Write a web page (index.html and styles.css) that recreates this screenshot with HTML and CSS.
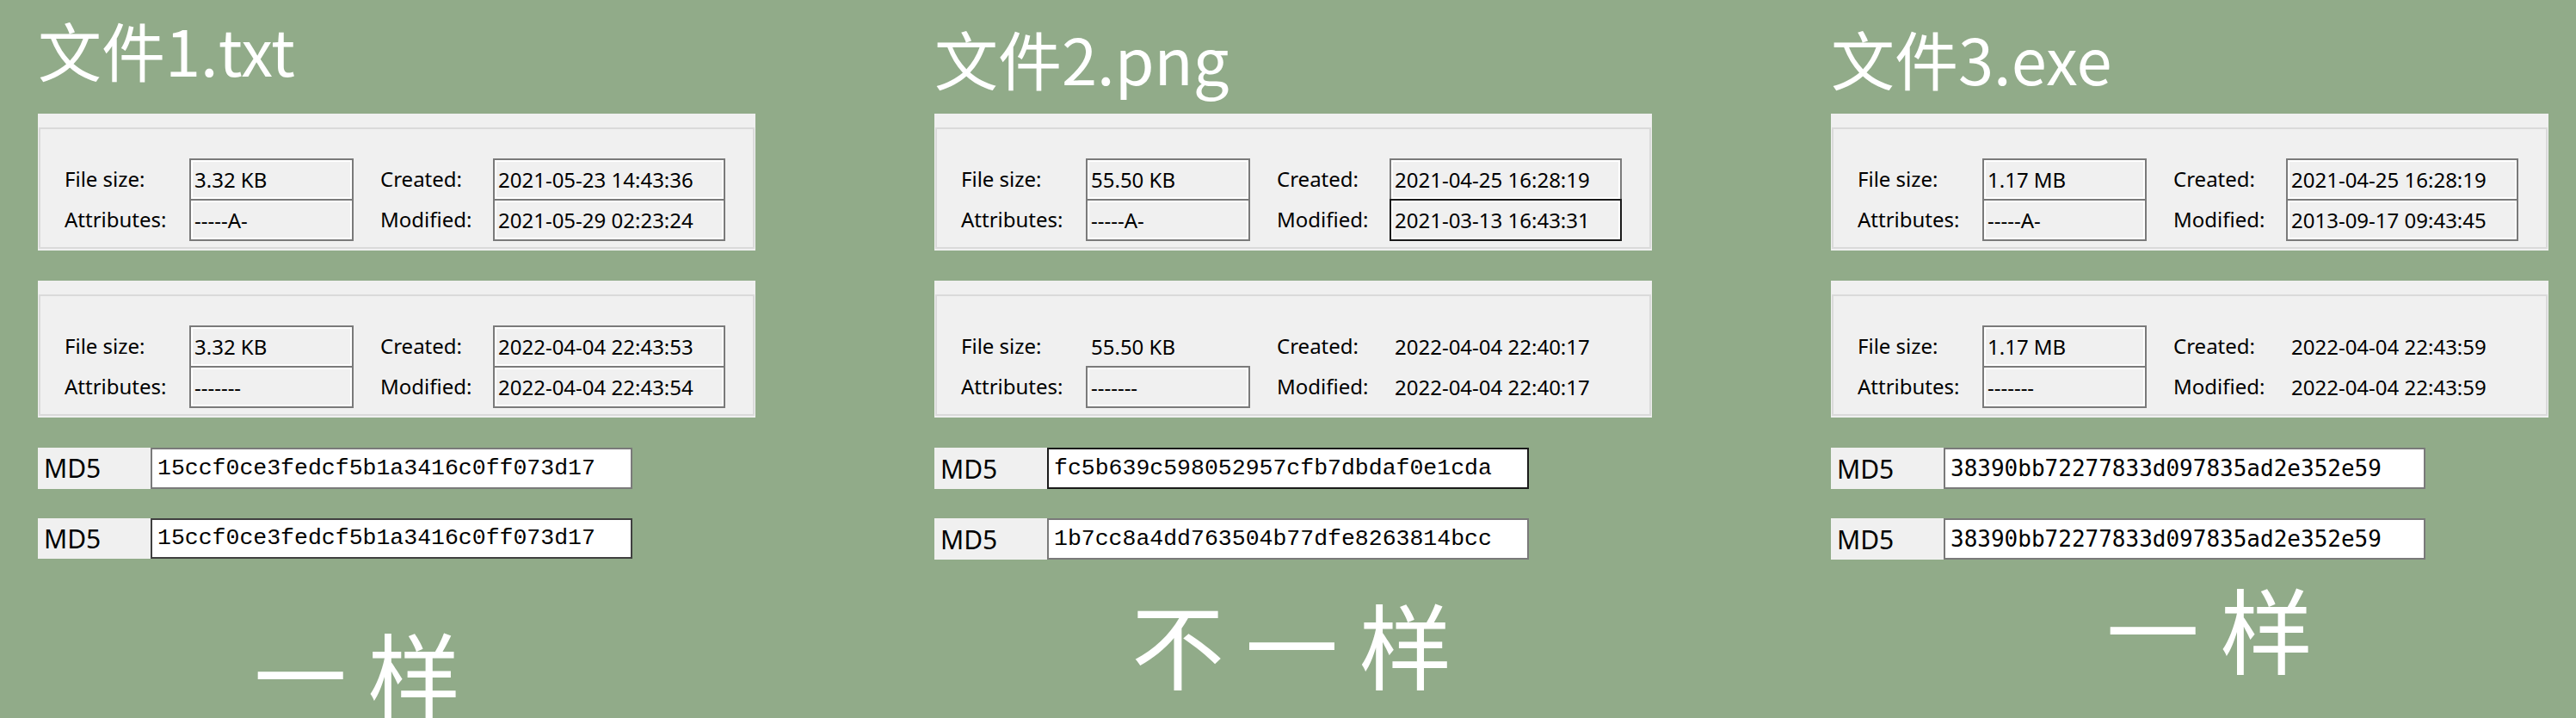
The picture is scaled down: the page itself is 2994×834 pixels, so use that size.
FILE: index.html
```html
<!DOCTYPE html>
<html lang="zh-CN">
<head>
    <meta charset="UTF-8">
    <meta name="viewport" content="width=device-width, initial-scale=1.0">
    <title>文件属性与 MD5 对比</title>
    <link rel="stylesheet" href="styles.css">
</head>
<body>

    <div class="board">

        <!-- 文件1 -->
        <section class="column column--first">
            <h1 class="file-name">文件1.txt</h1>

            <div class="panel">
                <div class="panel-body">
                    <span class="label">File size:</span>
                    <span class="field">3.32 KB</span>
                    <span class="label label--right">Created:</span>
                    <span class="field">2021-05-23 14:43:36</span>
                    <span class="label">Attributes:</span>
                    <span class="field">-----A-</span>
                    <span class="label label--right">Modified:</span>
                    <span class="field">2021-05-29 02:23:24</span>
                </div>
            </div>

            <div class="panel">
                <div class="panel-body">
                    <span class="label">File size:</span>
                    <span class="field">3.32 KB</span>
                    <span class="label label--right">Created:</span>
                    <span class="field">2022-04-04 22:43:53</span>
                    <span class="label">Attributes:</span>
                    <span class="field">-------</span>
                    <span class="label label--right">Modified:</span>
                    <span class="field">2022-04-04 22:43:54</span>
                </div>
            </div>

            <div class="md5-row">
                <span class="md5-label">MD5</span>
                <span class="md5-value">15ccf0ce3fedcf5b1a3416c0ff073d17</span>
            </div>
            <div class="md5-row md5-row--second">
                <span class="md5-label">MD5</span>
                <span class="md5-value md5-value--hover">15ccf0ce3fedcf5b1a3416c0ff073d17</span>
            </div>

            <div class="verdict">一 样</div>
        </section>

        <!-- 文件2 -->
        <section class="column column--second">
            <h1 class="file-name">文件2.png</h1>

            <div class="panel">
                <div class="panel-body">
                    <span class="label">File size:</span>
                    <span class="field">55.50 KB</span>
                    <span class="label label--right">Created:</span>
                    <span class="field">2021-04-25 16:28:19</span>
                    <span class="label">Attributes:</span>
                    <span class="field">-----A-</span>
                    <span class="label label--right">Modified:</span>
                    <span class="field field--focus">2021-03-13 16:43:31</span>
                </div>
            </div>

            <div class="panel">
                <div class="panel-body">
                    <span class="label">File size:</span>
                    <span class="field field--plain">55.50 KB</span>
                    <span class="label label--right">Created:</span>
                    <span class="field field--plain">2022-04-04 22:40:17</span>
                    <span class="label">Attributes:</span>
                    <span class="field">-------</span>
                    <span class="label label--right">Modified:</span>
                    <span class="field field--plain">2022-04-04 22:40:17</span>
                </div>
            </div>

            <div class="md5-row">
                <span class="md5-label">MD5</span>
                <span class="md5-value md5-value--focus">fc5b639c598052957cfb7dbdaf0e1cda</span>
            </div>
            <div class="md5-row md5-row--second">
                <span class="md5-label">MD5</span>
                <span class="md5-value">1b7cc8a4dd763504b77dfe8263814bcc</span>
            </div>

            <div class="verdict">不 一 样</div>
        </section>

        <!-- 文件3 -->
        <section class="column column--third">
            <h1 class="file-name">文件3.exe</h1>

            <div class="panel">
                <div class="panel-body">
                    <span class="label">File size:</span>
                    <span class="field">1.17 MB</span>
                    <span class="label label--right">Created:</span>
                    <span class="field">2021-04-25 16:28:19</span>
                    <span class="label">Attributes:</span>
                    <span class="field">-----A-</span>
                    <span class="label label--right">Modified:</span>
                    <span class="field">2013-09-17 09:43:45</span>
                </div>
            </div>

            <div class="panel">
                <div class="panel-body">
                    <span class="label">File size:</span>
                    <span class="field">1.17 MB</span>
                    <span class="label label--right">Created:</span>
                    <span class="field field--plain">2022-04-04 22:43:59</span>
                    <span class="label">Attributes:</span>
                    <span class="field">-------</span>
                    <span class="label label--right">Modified:</span>
                    <span class="field field--plain">2022-04-04 22:43:59</span>
                </div>
            </div>

            <div class="md5-row">
                <span class="md5-label">MD5</span>
                <span class="md5-value md5-value--sans">38390bb72277833d097835ad2e352e59</span>
            </div>
            <div class="md5-row md5-row--second">
                <span class="md5-label">MD5</span>
                <span class="md5-value md5-value--sans">38390bb72277833d097835ad2e352e59</span>
            </div>

            <div class="verdict">一 样</div>
        </section>

    </div>

</body>
</html>
```

FILE: styles.css
```css
/* Page */
body {
    margin: 0;
    padding: 0;
    background: #91ab89;
    font-family: 'Noto Sans', 'Noto Sans CJK SC', sans-serif;
    color: #000;
    overflow: hidden;
}

.board {
    display: flex;
    gap: 208px;
    padding-left: 44px;
    height: 834px;
}

/* One file per column */
.column {
    width: 834px;
    display: flex;
    flex-direction: column;
}

/* File title */
.file-name {
    margin: 29px 0 27px;
    font-family: 'Noto Sans CJK SC', sans-serif;
    font-size: 74px;
    font-weight: normal;
    line-height: 76px;
    color: #fff;
}

.column--first .file-name {
    margin: 19px 0 37px;
}

/* Properties panel (looks like a Windows tab page) */
.panel {
    background: #f0f0f0;
    padding: 16px 1px 2px 1px;
}

.panel + .panel {
    margin-top: 35px;
}

.panel-body {
    display: grid;
    grid-template-columns: 145px 191px 162px 270px;
    grid-template-rows: 47px 47px;
    padding: 34px 0 9px 28px;
    border: 2px solid #dadada;
}

.label {
    align-self: center;
    font-size: 24px;
    white-space: nowrap;
}

.label--right {
    padding-left: 31px;
}

.field {
    height: 49px;
    box-sizing: border-box;
    display: flex;
    align-items: center;
    padding: 0 4px;
    border: 2px solid #7a7a7a;
    box-shadow: inset 0 0 0 2px #fff;
    font-size: 24px;
    white-space: nowrap;
}

.field--focus {
    border-color: #1a1a1a;
}

.field--plain {
    border-color: transparent;
    box-shadow: none;
}

/* MD5 rows */
.md5-row {
    display: flex;
    height: 48px;
    margin-top: 35px;
}

.md5-row--second {
    margin-top: 34px;
}

.md5-label {
    width: 131px;
    box-sizing: border-box;
    padding-left: 7px;
    display: flex;
    align-items: center;
    background: #f0f0f0;
    font-size: 30px;
}

.md5-value {
    width: 560px;
    box-sizing: border-box;
    padding-left: 6px;
    display: flex;
    align-items: center;
    background: #fff;
    border: 2px solid #7a7a7a;
    font-family: 'Liberation Mono', monospace;
    font-size: 26.5px;
}

.md5-value--focus {
    border-color: #1a1a1a;
}

.md5-value--hover {
    border-color: #404040;
}

.md5-value--sans {
    font-family: 'DejaVu Sans Mono', monospace;
    font-size: 26px;
}

/* Big verdict text (the first one runs off the bottom, as in the shot) */
.verdict {
    font-family: 'Noto Sans CJK SC', sans-serif;
    font-size: 108px;
    line-height: 108px;
    color: #fff;
    white-space: pre;
}

.column--first .verdict {
    margin: 77px 0 0 251px;
}

.column--second .verdict {
    margin: 42px 0 0 229px;
}

.column--third .verdict {
    margin: 24px 0 0 320px;
}
```
